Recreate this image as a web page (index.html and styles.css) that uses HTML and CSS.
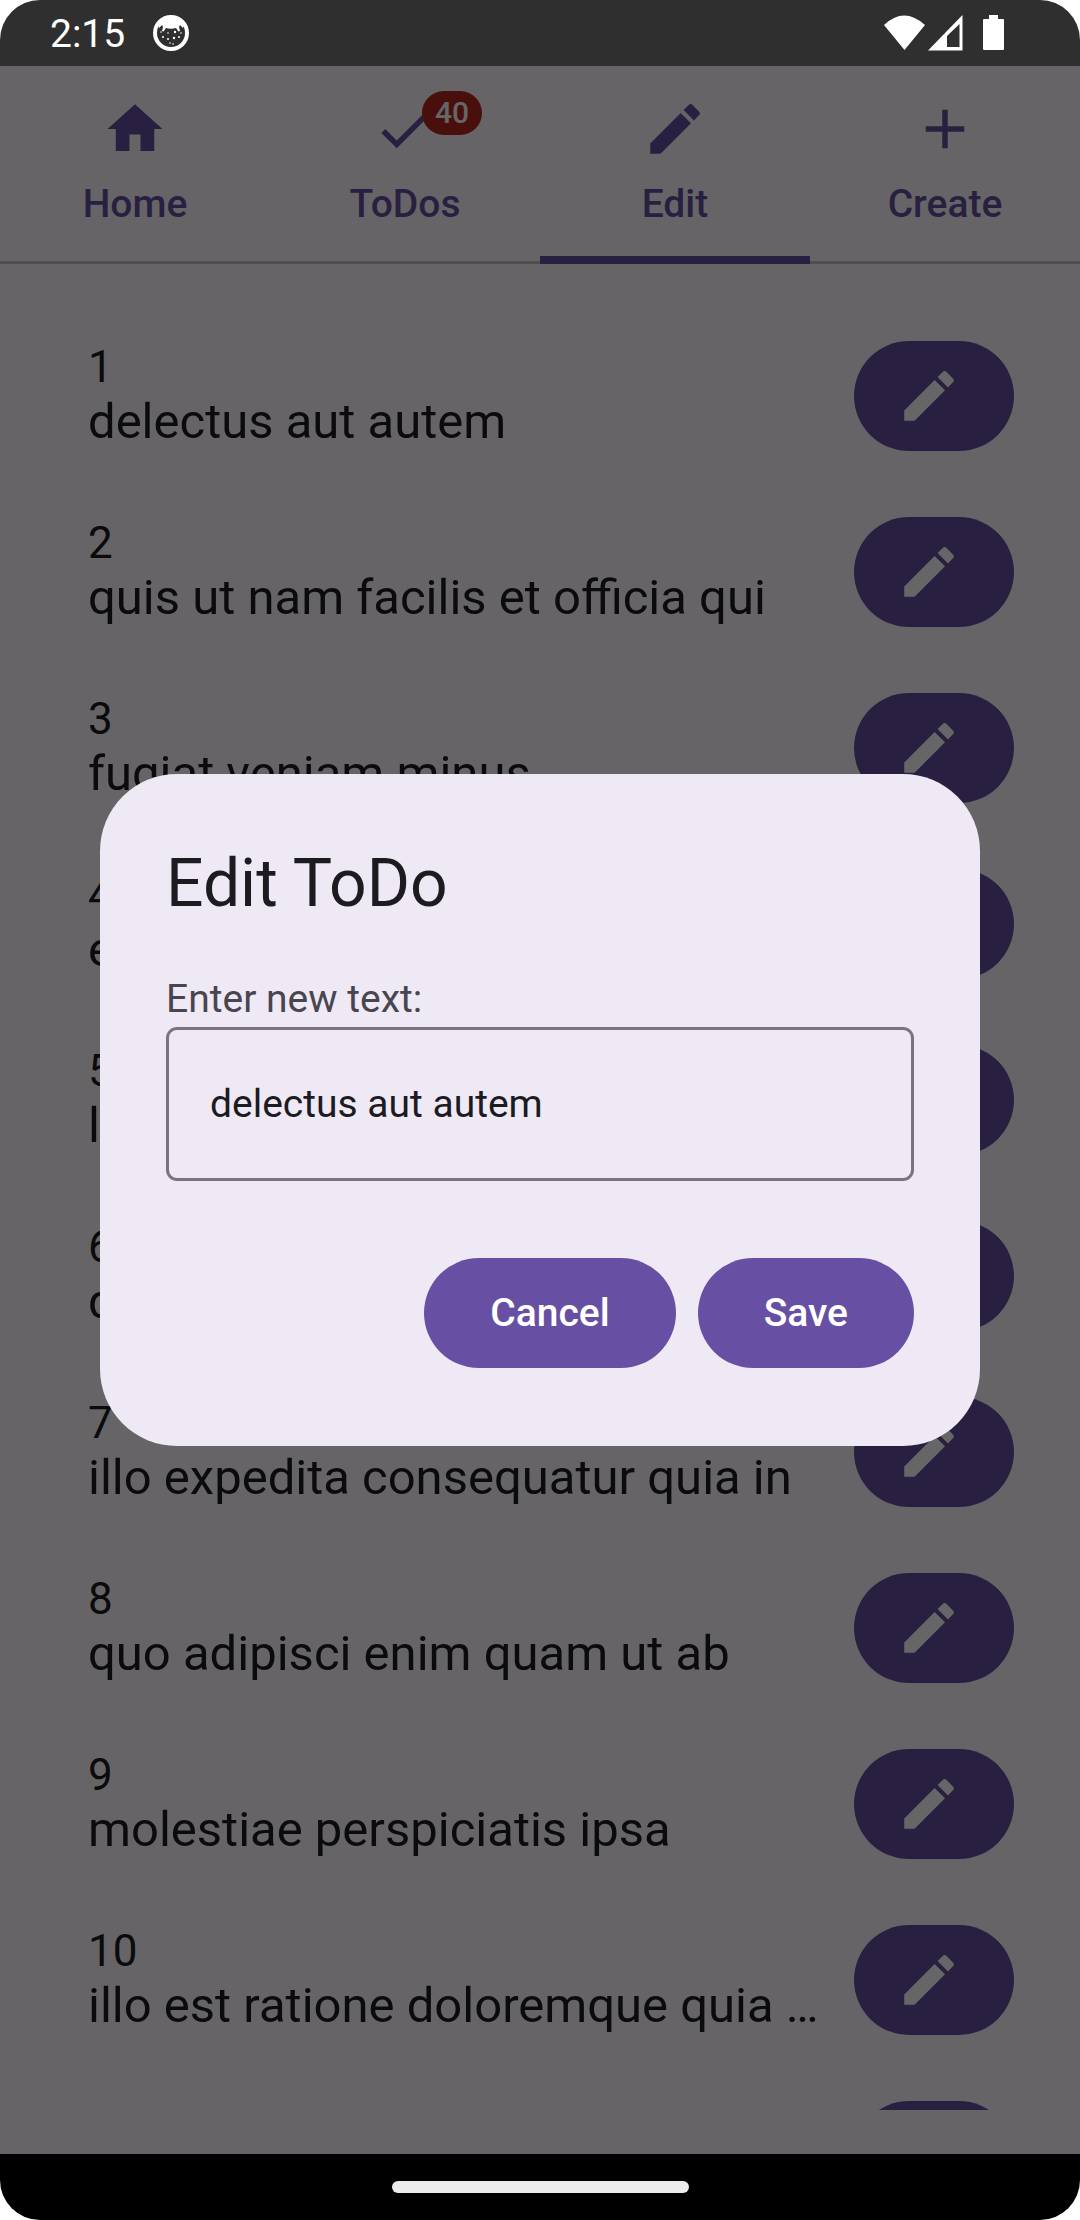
FILE: index.html
```html
<!DOCTYPE html>
<html lang="en">
<head>
<meta charset="utf-8">
<meta name="viewport" content="width=device-width, initial-scale=1">
<title>ToDos</title>
<link rel="stylesheet" href="styles.css">
</head>
<body>
<svg class="sprite" aria-hidden="true">
  <symbol id="pencil" viewBox="0 0 24 24"><path d="M3 17.25V21h3.75L17.81 9.94l-3.75-3.75L3 17.25zM20.71 7.04a.996.996 0 0 0 0-1.41l-2.34-2.34a.996.996 0 0 0-1.41 0l-1.83 1.83 3.75 3.75 1.83-1.83z"/></symbol>
</svg>
<div class="phone">
  <header class="status">
    <span class="status-time">2:15</span>
    <svg class="status-app" viewBox="0 0 36 36" aria-hidden="true">
      <circle cx="18" cy="18" r="16" fill="none" stroke="#fff" stroke-width="4"/>
      <path fill="#fff" d="M5 10C8 4 13 2 18 2s10 2 13 8l-1 3-3-3-1 2 1 4-1.500.5-2.500-3.500q-5 1.500-10 0L10.500 16.500 9 16l1-4-1-2-3 3z"/>
      <g fill="#fff"><circle cx="8" cy="17" r=".8"/><circle cx="10" cy="22" r="1"/><circle cx="15" cy="24" r="1"/><circle cx="21" cy="23" r="1.200"/><circle cx="22" cy="17" r="1.200"/><circle cx="26" cy="22" r="1"/><circle cx="28" cy="18" r=".8"/><circle cx="17" cy="28" r=".8"/><circle cx="20" cy="29" r=".8"/><circle cx="15" cy="18" r=".8"/></g>
    </svg>
    <svg class="status-signal" viewBox="0 0 120 36" aria-hidden="true" fill="#fff">
      <path d="M0 10Q20-9 41 10L20.500 35z"/>
      <path fill-rule="evenodd" d="M78.500 0V35.500H44zM75.500 9L63 21V32H75.500z"/>
      <path d="M105 0h9v4h5a1 1 0 0 1 1 1v29a1 1 0 0 1-1 1h-19a1 1 0 0 1-1-1V5a1 1 0 0 1 1-1h5z"/>
    </svg>
  </header>
  <div class="screen">
    <nav class="tabs">
      <a class="tab" href="#home"><svg class="icon" viewBox="0 0 24 24" aria-hidden="true"><path d="M10 20v-6h4v6h5v-8h3L12 3 2 12h3v8z"/></svg><span>Home</span></a>
      <a class="tab" href="#todos"><span class="tab-icon"><svg class="icon" viewBox="0 0 24 24" aria-hidden="true"><path d="M9 16.170 4.830 12l-1.420 1.410L9 19 21 7l-1.410-1.410z"/></svg><span class="badge">40</span></span><span>ToDos</span></a>
      <a class="tab tab-active" href="#edit" aria-current="page"><svg class="icon" aria-hidden="true"><use href="#pencil"/></svg><span>Edit</span></a>
      <a class="tab" href="#create"><svg class="icon" viewBox="0 0 24 24" aria-hidden="true"><path d="M19 13h-6v6h-2v-6H5v-2h6V5h2v6h6v2z"/></svg><span>Create</span></a>
    </nav>
    <ul class="todos">
      <li class="todo"><div class="todo-text"><div class="todo-id">1</div><div class="todo-title">delectus aut autem</div></div><button class="edit" aria-label="Edit 1"><svg class="icon"><use href="#pencil"/></svg></button></li>
      <li class="todo"><div class="todo-text"><div class="todo-id">2</div><div class="todo-title">quis ut nam facilis et officia qui</div></div><button class="edit" aria-label="Edit 2"><svg class="icon"><use href="#pencil"/></svg></button></li>
      <li class="todo"><div class="todo-text"><div class="todo-id">3</div><div class="todo-title">fugiat veniam minus</div></div><button class="edit" aria-label="Edit 3"><svg class="icon"><use href="#pencil"/></svg></button></li>
      <li class="todo"><div class="todo-text"><div class="todo-id">4</div><div class="todo-title">et porro tempora</div></div><button class="edit" aria-label="Edit 4"><svg class="icon"><use href="#pencil"/></svg></button></li>
      <li class="todo"><div class="todo-text"><div class="todo-id">5</div><div class="todo-title">laboriosam mollitia et enim</div></div><button class="edit" aria-label="Edit 5"><svg class="icon"><use href="#pencil"/></svg></button></li>
      <li class="todo"><div class="todo-text"><div class="todo-id">6</div><div class="todo-title">qui ullam ratione quibusdam</div></div><button class="edit" aria-label="Edit 6"><svg class="icon"><use href="#pencil"/></svg></button></li>
      <li class="todo"><div class="todo-text"><div class="todo-id">7</div><div class="todo-title">illo expedita consequatur quia in</div></div><button class="edit" aria-label="Edit 7"><svg class="icon"><use href="#pencil"/></svg></button></li>
      <li class="todo"><div class="todo-text"><div class="todo-id">8</div><div class="todo-title">quo adipisci enim quam ut ab</div></div><button class="edit" aria-label="Edit 8"><svg class="icon"><use href="#pencil"/></svg></button></li>
      <li class="todo"><div class="todo-text"><div class="todo-id">9</div><div class="todo-title">molestiae perspiciatis ipsa</div></div><button class="edit" aria-label="Edit 9"><svg class="icon"><use href="#pencil"/></svg></button></li>
      <li class="todo"><div class="todo-text"><div class="todo-id">10</div><div class="todo-title">illo est ratione doloremque quia maiores aut</div></div><button class="edit" aria-label="Edit 10"><svg class="icon"><use href="#pencil"/></svg></button></li>
      <li class="todo"><div class="todo-text"><div class="todo-id">11</div><div class="todo-title">vero rerum temporibus dolor</div></div><button class="edit" aria-label="Edit 11"><svg class="icon"><use href="#pencil"/></svg></button></li>
    </ul>
    <div class="scrim">
      <form class="dialog" role="dialog" aria-labelledby="dialog-title">
        <h1 class="dialog-title" id="dialog-title">Edit ToDo</h1>
        <label class="dialog-label" for="todo-input">Enter new text:</label>
        <input class="dialog-input" id="todo-input" type="text" value="delectus aut autem">
        <div class="dialog-actions">
          <button class="action" type="button">Cancel</button>
          <button class="action" type="submit">Save</button>
        </div>
      </form>
    </div>
  </div>
  <footer class="navbar"><div class="navbar-pill"></div></footer>
</div>
</body>
</html>
```
FILE: styles.css
```css
*, *::before, *::after { box-sizing: border-box; }

body {
  margin: 0;
  background: #fff;
  font-family: Roboto, "Noto Sans", sans-serif;
  color: #1c1b1f;
}

button, input { font: inherit; border: 0; }

.sprite { display: none; }

.phone {
  display: flex;
  flex-direction: column;
  height: 100vh;
  overflow: hidden;
  border-radius: 40px;
}

.status {
  display: flex;
  align-items: center;
  flex: none;
  height: 66px;
  padding: 0 76px 0 50px;
  background: #2f2f2f;
  color: #fff;
}
.status-time { font-size: 39px; line-height: 48px; padding-top: 2px; }
.status-app { width: 36px; height: 36px; margin-left: 28px; }
.status-signal { width: 120px; height: 36px; margin-left: auto; }

.screen {
  position: relative;
  display: flex;
  flex-direction: column;
  flex: 1;
  min-height: 0;
  background: #fffbfe;
}

.icon { display: block; width: 66px; height: 66px; fill: currentColor; }

.tabs {
  display: grid;
  grid-template-columns: repeat(4, 1fr);
  flex: none;
  height: 198px;
  box-shadow: inset 0 -3px #cac4d0;
}
.tab {
  display: flex;
  flex-direction: column;
  align-items: center;
  gap: 14px;
  padding-top: 30px;
  color: #6750a4;
  font-size: 39px;
  font-weight: 500;
  line-height: 56px;
  text-decoration: none;
}
.tab-active { box-shadow: inset 0 -8px #6750a4; }
.tab-icon { position: relative; }
.badge {
  position: absolute;
  left: 50px;
  top: -5px;
  min-width: 60px;
  padding: 0 13px;
  border-radius: 22px;
  background: #b3261e;
  color: #fff;
  font-size: 30px;
  line-height: 44px;
  text-align: center;
}

.todos {
  display: flex;
  flex-direction: column;
  flex: 1;
  gap: 66px;
  min-height: 0;
  margin: 0 0 44px;
  padding: 77px 66px 0 88px;
  overflow: hidden;
  list-style: none;
}
.todo { display: flex; flex: none; gap: 22px; }
.todo-text { flex: 1; min-width: 0; }
.todo-id { font-size: 44px; line-height: 52px; }
.todo-title {
  overflow: hidden;
  font-size: 49px;
  line-height: 58px;
  text-overflow: ellipsis;
  white-space: nowrap;
}
.edit {
  flex: none;
  height: 110px;
  padding: 0 52px 0 42px;
  border-radius: 55px;
  background: #6750a4;
  color: #fff;
}

.scrim {
  position: absolute;
  inset: 0;
  display: flex;
  align-items: center;
  justify-content: center;
  padding: 0 100px;
  background: rgba(0, 0, 0, 0.6);
}
.dialog {
  display: flex;
  flex-direction: column;
  width: 100%;
  max-width: 1540px;
  padding: 66px 66px 78px;
  border-radius: 77px;
  background: #eee9f4;
}
.dialog-title {
  margin: 0 0 44px;
  font-size: 66px;
  font-weight: 400;
  line-height: 88px;
}
.dialog-label { color: #49454f; font-size: 39px; line-height: 55px; }
.dialog-input {
  width: 100%;
  height: 154px;
  padding: 0 41px;
  border: 3px solid #79747e;
  border-radius: 11px;
  background: transparent;
  color: #1c1b1f;
  font-size: 39px;
}
.dialog-actions {
  display: flex;
  justify-content: flex-end;
  gap: 22px;
  margin-top: 77px;
}
.action {
  height: 110px;
  padding: 0 66px;
  border-radius: 55px;
  background: #6750a4;
  color: #fff;
  font-size: 39px;
  font-weight: 500;
}

.navbar {
  display: flex;
  align-items: center;
  justify-content: center;
  flex: none;
  height: 66px;
  background: #000;
}
.navbar-pill { width: 297px; height: 12px; border-radius: 6px; background: #ececec; }
```
